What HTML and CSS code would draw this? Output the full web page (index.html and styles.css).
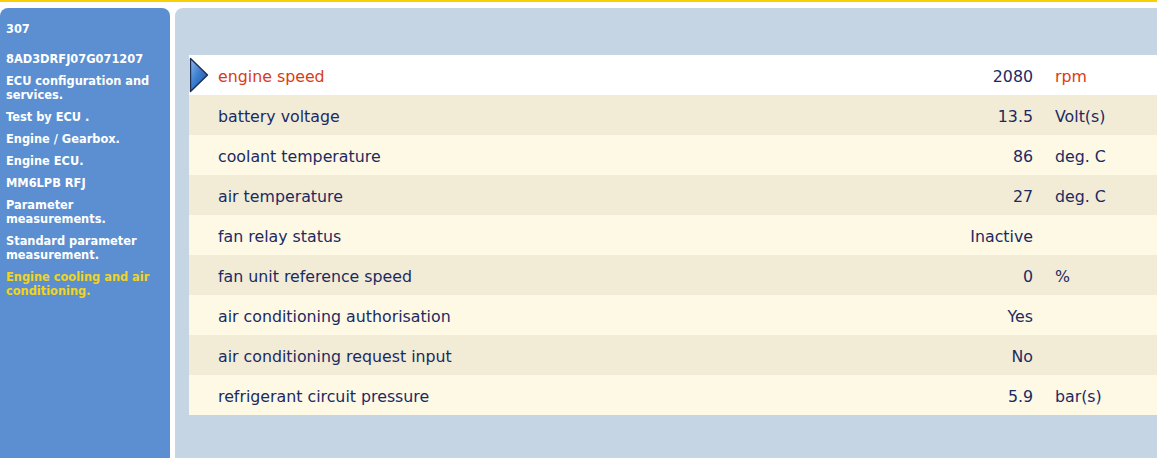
FILE: index.html
```html
<!DOCTYPE html>
<html>
<head>
<meta charset="utf-8">
<link rel="stylesheet" href="styles.css">
</head>
<body>
<div class="topbar"></div>
<div class="layout">
  <nav class="sidebar">
    <div class="item first">307</div>
    <div class="item">8AD3DRFJ07G071207</div>
    <div class="item">ECU configuration and services.</div>
    <div class="item">Test by ECU .</div>
    <div class="item">Engine / Gearbox.</div>
    <div class="item">Engine ECU.</div>
    <div class="item">MM6LPB RFJ</div>
    <div class="item">Parameter measurements.</div>
    <div class="item">Standard parameter measurement.</div>
    <div class="item current">Engine cooling and air conditioning.</div>
  </nav>
  <main class="panel">
    <div class="params">
      <div class="row selected">
        <svg class="arrow" width="20" height="36" viewBox="0 0 20 36">
          <defs>
            <linearGradient id="ag" x1="0" y1="0" x2="1" y2="1">
              <stop offset="0" stop-color="#8fb8ea"/>
              <stop offset="0.45" stop-color="#3d7fd0"/>
              <stop offset="1" stop-color="#1d4e9c"/>
            </linearGradient>
          </defs>
          <path d="M1.5 1.5 L18.5 18 L1.5 34.5 Z" fill="url(#ag)" stroke="#1b2e52" stroke-width="1.4" stroke-linejoin="round"/>
        </svg>
        <span class="label">engine speed</span><span class="value">2080</span><span class="unit">rpm</span>
      </div>
      <div class="row dark"><span class="label">battery voltage</span><span class="value">13.5</span><span class="unit">Volt(s)</span></div>
      <div class="row light"><span class="label">coolant temperature</span><span class="value">86</span><span class="unit">deg. C</span></div>
      <div class="row dark"><span class="label">air temperature</span><span class="value">27</span><span class="unit">deg. C</span></div>
      <div class="row light"><span class="label">fan relay status</span><span class="value">Inactive</span><span class="unit"></span></div>
      <div class="row dark"><span class="label">fan unit reference speed</span><span class="value">0</span><span class="unit">%</span></div>
      <div class="row light"><span class="label">air conditioning authorisation</span><span class="value">Yes</span><span class="unit"></span></div>
      <div class="row dark"><span class="label">air conditioning request input</span><span class="value">No</span><span class="unit"></span></div>
      <div class="row light"><span class="label">refrigerant circuit pressure</span><span class="value">5.9</span><span class="unit">bar(s)</span></div>
    </div>
  </main>
</div>
</body>
</html>
```
FILE: styles.css
```css
html, body {
  margin: 0;
  padding: 0;
  background: #ffffff;
  height: 100%;
  overflow: hidden;
}
.topbar {
  height: 2px;
  background: #f8cf00;
}
.layout {
  display: flex;
  gap: 5px;
  margin-top: 6px;
  height: 450px;
}
.sidebar {
  width: 170px;
  flex: none;
  background: #5b8fd1;
  border-radius: 8px 8px 0 0;
  padding: 14px 6px 0 6px;
  box-sizing: border-box;
  font-family: "DejaVu Sans", Verdana, sans-serif;
  font-weight: bold;
  font-size: 11.4px;
  line-height: 14px;
  color: #ffffff;
  display: flex;
  flex-direction: column;
  gap: 8px;
}
.sidebar .item.first {
  margin-bottom: 8px;
}
.sidebar .item.current {
  color: #f3d417;
}
.panel {
  flex: 1;
  background: #c5d5e3;
  border-radius: 8px 0 0 0;
  padding: 47px 0 0 14px;
  box-sizing: border-box;
}
.params {
  font-family: "DejaVu Sans", Verdana, sans-serif;
  font-size: 15.8px;
  color: #1b2a63;
}
.row {
  position: relative;
  display: grid;
  grid-template-columns: 1fr auto 102px;
  column-gap: 22px;
  align-items: center;
  height: 40px;
  padding: 3px 0 0 29px;
  box-sizing: border-box;
}
.row.selected {
  background: #ffffff;
}
.row.dark {
  background: #f2ecd6;
}
.row.light {
  background: #fdf9e4;
}
.row .value {
  text-align: right;
}
.row.selected .label,
.row.selected .unit {
  color: #d83b17;
}
.arrow {
  position: absolute;
  left: 0;
  top: 2px;
}
```
